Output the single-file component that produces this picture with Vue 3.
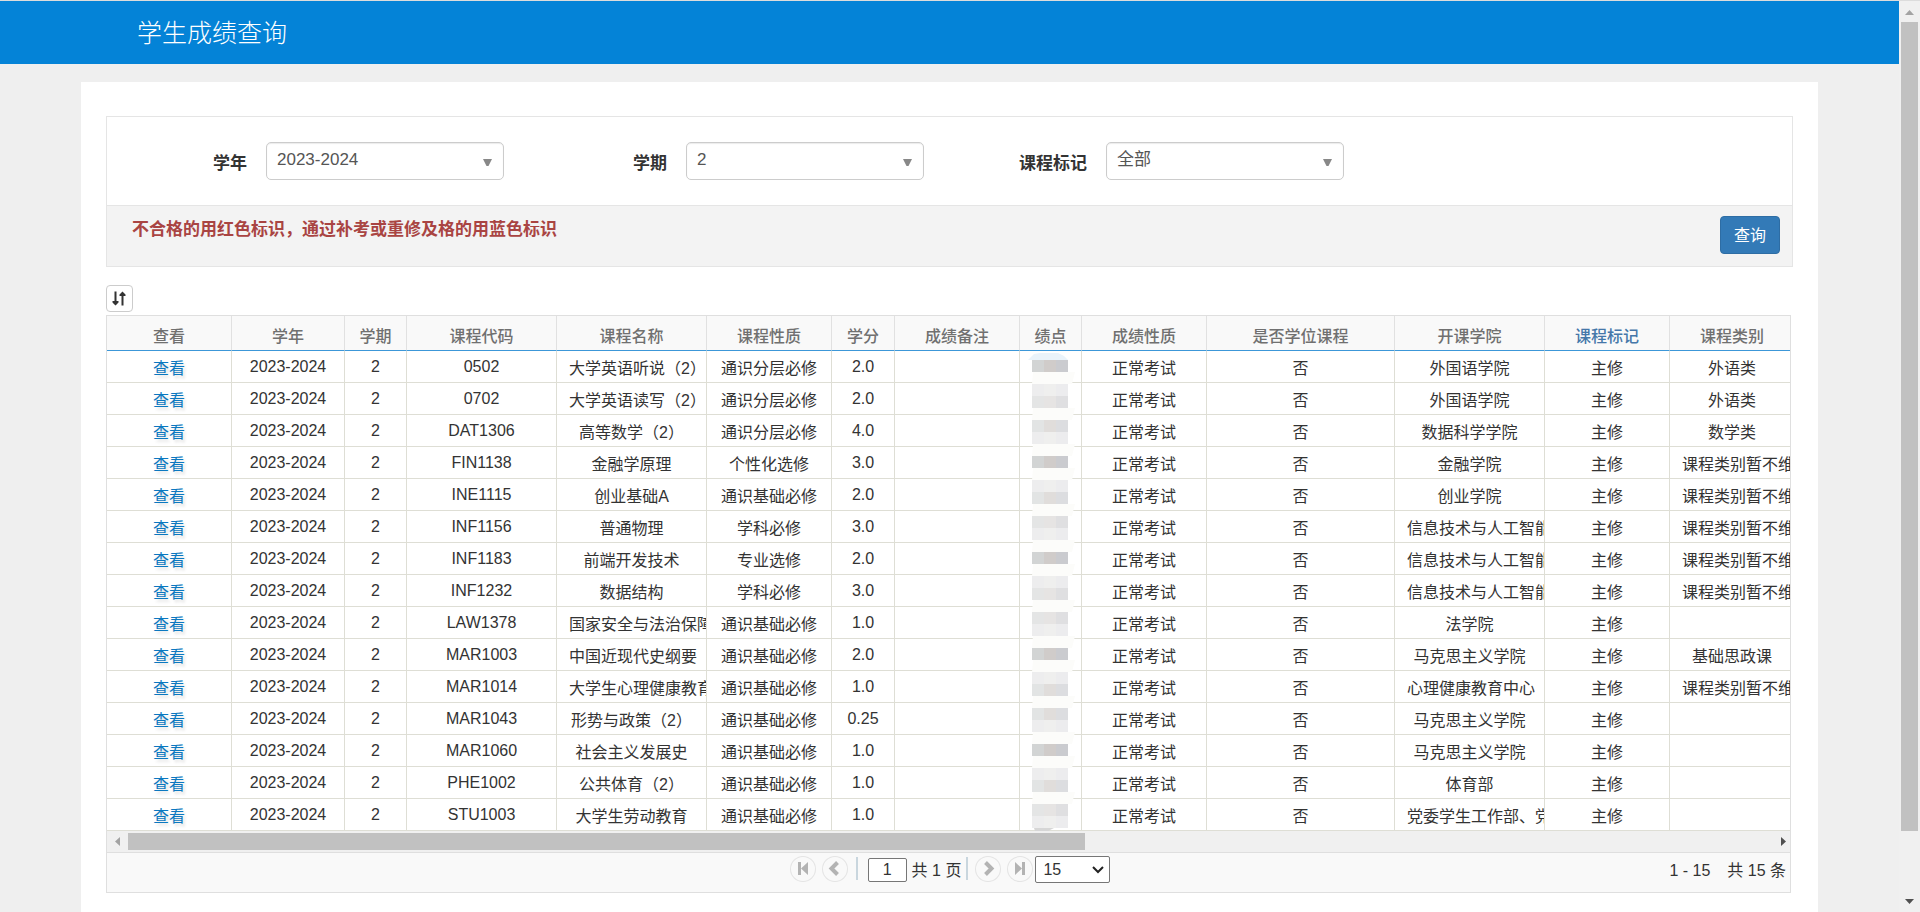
<script setup>
import { ref } from 'vue'

const filters = [
  { id: 'year', label: '学年', value: '2023-2024' },
  { id: 'term', label: '学期', value: '2' },
  { id: 'mark', label: '课程标记', value: '全部' },
]

const columns = [
  { title: '查看', width: 125 },
  { title: '学年', width: 113 },
  { title: '学期', width: 62 },
  { title: '课程代码', width: 150 },
  { title: '课程名称', width: 150 },
  { title: '课程性质', width: 125 },
  { title: '学分', width: 63 },
  { title: '成绩备注', width: 125 },
  { title: '绩点', width: 62 },
  { title: '成绩性质', width: 125 },
  { title: '是否学位课程', width: 188 },
  { title: '开课学院', width: 150 },
  { title: '课程标记', width: 125, sorted: true },
  { title: '课程类别', width: 125 },
]

const unset = '课程类别暂不维护'
const ai = '信息技术与人工智能学院'
const courses = [
  ['0502', '大学英语听说（2）', '通识分层必修', '2.0', '外国语学院', '外语类'],
  ['0702', '大学英语读写（2）', '通识分层必修', '2.0', '外国语学院', '外语类'],
  ['DAT1306', '高等数学（2）', '通识分层必修', '4.0', '数据科学学院', '数学类'],
  ['FIN1138', '金融学原理', '个性化选修', '3.0', '金融学院', unset],
  ['INE1115', '创业基础A', '通识基础必修', '2.0', '创业学院', unset],
  ['INF1156', '普通物理', '学科必修', '3.0', ai, unset],
  ['INF1183', '前端开发技术', '专业选修', '2.0', ai, unset],
  ['INF1232', '数据结构', '学科必修', '3.0', ai, unset],
  ['LAW1378', '国家安全与法治保障', '通识基础必修', '1.0', '法学院', ''],
  ['MAR1003', '中国近现代史纲要', '通识基础必修', '2.0', '马克思主义学院', '基础思政课'],
  ['MAR1014', '大学生心理健康教育', '通识基础必修', '1.0', '心理健康教育中心', unset],
  ['MAR1043', '形势与政策（2）', '通识基础必修', '0.25', '马克思主义学院', ''],
  ['MAR1060', '社会主义发展史', '通识基础必修', '1.0', '马克思主义学院', ''],
  ['PHE1002', '公共体育（2）', '通识基础必修', '1.0', '体育部', ''],
  ['STU1003', '大学生劳动教育', '通识基础必修', '1.0', '党委学生工作部、党委', ''],
]
const rows = courses.map(([code, name, nature, credit, college, category]) => [
  '2023-2024', '2', code, name, nature, credit, '', '', '正常考试', '否', college, '主修', category,
])

// Pixelated mask over the grade points: 12px bands of three tiles each
const tones = {
  d: ['#d2d4d4', '#d0ccca', '#cacbcf'],
  m: ['#e2e4e4', '#e0dddb', '#dcdde0'],
  n: ['#e4e5e5', '#e6e4e3', '#dfdfe1'],
  l: ['#ededee', '#efefee', '#ececee'],
}
const bands = 'dwlnwmlwdwlmwnlwdwlnwnlwdwlmwmlwdwlmwnl'.split('')

const page = ref('1')
</script>

<template>
  <div class="window">
    <div class="page">
      <header class="topbar"><h1>学生成绩查询</h1></header>
      <main>
        <section class="card">
          <form class="search" @submit.prevent>
            <div class="fields">
              <div v-for="f in filters" :key="f.id" class="field">
                <label :for="f.id">{{ f.label }}</label>
                <div class="picker">
                  <select :id="f.id"><option>{{ f.value }}</option></select>
                  <svg width="9" height="7" viewBox="0 0 9 7"><path d="M0 0H9L5.5 7H3.5Z" fill="#888" /></svg>
                </div>
              </div>
            </div>
            <div class="actions">
              <p>不合格的用红色标识，通过补考或重修及格的用蓝色标识</p>
              <button type="submit">查询</button>
            </div>
          </form>

          <button type="button" class="sort" aria-label="排序">
            <svg width="14" height="15" viewBox="0 0 14 15" fill="#333">
              <path d="M2.5 0.5H4.5V10H6.5V11.5L3.5 14.5L0.5 11.5V10H2.5Z" />
              <path d="M9.5 14.5H11.5V5H13.5V3.5L10.5 0.5L7.5 3.5V5H9.5Z" />
            </svg>
          </button>

          <div class="grid">
            <div class="viewport">
              <table>
                <colgroup>
                  <col v-for="c in columns" :key="c.title" :style="{ width: c.width + 'px' }" />
                </colgroup>
                <thead>
                  <tr>
                    <th v-for="c in columns" :key="c.title" :class="{ sorted: c.sorted }">{{ c.title }}</th>
                  </tr>
                </thead>
                <tbody>
                  <tr v-for="r in rows" :key="r[2]">
                    <td><a href="#">查看</a></td>
                    <td v-for="(v, i) in r" :key="i">{{ v }}</td>
                  </tr>
                </tbody>
              </table>
              <svg class="mask" width="50" height="480" viewBox="0 0 50 480">
                <path d="M2 8L8 2L14 1L32 1L38 4L42 8Z" fill="#eaf3fa" />
                <template v-for="(b, i) in bands" :key="i">
                  <path v-if="b === 'w'" :d="`M7 ${8 + i * 12}h42l-3 12H6Z`" fill="#fcfcfa" />
                  <template v-else>
                    <rect v-for="(t, j) in tones[b]" :key="j" :x="6 + j * 12" :y="8 + i * 12" width="12" height="12" :fill="t" />
                  </template>
                </template>
                <path d="M8 476H28L22 479H9Z" fill="#d6d6d6" />
              </svg>
            </div>
            <div class="hbar">
              <svg width="21" height="21" viewBox="0 0 21 21"><path d="M13 6V15L8 10.5Z" fill="#a3a3a3" /></svg>
              <div class="hthumb"></div>
              <div class="hrest"></div>
              <svg width="21" height="21" viewBox="0 0 21 21"><path d="M12 6V15L17 10.5Z" fill="#505050" /></svg>
            </div>
            <div class="pager">
              <div class="controls">
                <button type="button" aria-label="首页">
                  <svg width="26" height="26" viewBox="0 0 26 26"><path d="M8 6H11V19H8ZM18 6V19L11 12.5Z" fill="#b3b3b3" /></svg>
                </button>
                <button type="button" aria-label="上一页">
                  <svg width="26" height="26" viewBox="0 0 26 26"><path d="M15.5 6.5L9.5 12.5L15.5 18.5" fill="none" stroke="#b3b3b3" stroke-width="4" /></svg>
                </button>
                <span class="sep"></span>
                <input v-model="page" type="text" aria-label="页码" />
                <span class="total">共 1 页</span>
                <span class="sep"></span>
                <button type="button" class="next" aria-label="下一页">
                  <svg width="26" height="26" viewBox="0 0 26 26"><path d="M10.5 6.5L16.5 12.5L10.5 18.5" fill="none" stroke="#b3b3b3" stroke-width="4" /></svg>
                </button>
                <button type="button" aria-label="末页">
                  <svg width="26" height="26" viewBox="0 0 26 26"><path d="M18 6H15V19H18ZM8 6V19L15 12.5Z" fill="#b3b3b3" /></svg>
                </button>
                <div class="size">
                  <select aria-label="每页条数"><option>15</option></select>
                  <svg width="12" height="8" viewBox="0 0 12 8"><path d="M1 1L6 6L11 1" fill="none" stroke="#222" stroke-width="2" /></svg>
                </div>
              </div>
              <div class="summary"><span>1 - 15</span><span>共 15 条</span></div>
            </div>
          </div>
        </section>
      </main>
    </div>
    <div class="vbar">
      <svg width="21" height="21" viewBox="0 0 21 21"><path d="M6 14H15L10.5 9Z" fill="#a3a3a3" /></svg>
      <div class="vthumb"></div>
      <div class="vrest"></div>
      <svg width="21" height="21" viewBox="0 0 21 21"><path d="M6 8H15L10.5 13Z" fill="#505050" /></svg>
    </div>
  </div>
</template>

<style>
body {
  margin: 0;
  overflow: hidden;
}
</style>

<style scoped>
* {
  box-sizing: border-box;
}
.window {
  display: grid;
  grid-template-columns: 1fr 21px;
  height: 100vh;
  border-top: 1px solid #dcdcdc;
  background: #efefef;
  color: #333;
  font: 16px "Liberation Sans", "Noto Sans CJK SC", sans-serif;
}
button,
input,
select {
  margin: 0;
  font: inherit;
  color: inherit;
}
.page {
  display: flex;
  flex-direction: column;
  min-width: 0;
  overflow: hidden;
}
.topbar {
  display: flex;
  flex: none;
  align-items: center;
  height: 63px;
  padding: 0 0 4px 137px;
  background: #0483d7;
}
h1 {
  margin: 0;
  color: #fff;
  font-size: 25px;
  font-weight: 300;
}
main {
  display: flex;
  flex: 1;
  padding: 18px 81px 0;
}
.card {
  flex: 1;
  min-width: 0;
  padding: 34px 25px 0;
  background: #fff;
}
.search {
  border: 1px solid #e5e5e5;
}
.fields {
  display: grid;
  grid-template-columns: repeat(4, 1fr);
  padding: 25px 0 25px 5px;
}
.field {
  display: grid;
  grid-template-columns: 135px 238px;
  gap: 19px;
}
.field label {
  padding-top: 6px;
  font-size: 17px;
  font-weight: bold;
  text-align: right;
  line-height: 32px;
}
.picker {
  position: relative;
}
.picker select {
  display: block;
  width: 100%;
  height: 38px;
  padding: 0 10px 4px;
  appearance: none;
  border: 1px solid #ccc;
  border-radius: 5px;
  background: #fff;
  box-shadow: inset 0 1px 1px rgba(0, 0, 0, 0.08);
  color: #555;
  font-size: 17px;
}
.picker svg {
  position: absolute;
  top: 17px;
  right: 12px;
  pointer-events: none;
}
.actions {
  display: flex;
  justify-content: space-between;
  align-items: flex-start;
  padding: 10px 12px 12px 25px;
  border-top: 1px solid #e5e5e5;
  background: #f3f3f3;
}
.actions p {
  margin: 0;
  color: #a94442;
  font-size: 17px;
  font-weight: bold;
  line-height: 28px;
}
.actions button {
  width: 60px;
  height: 38px;
  padding: 0 0 3px;
  border: 1px solid #2e6da4;
  border-radius: 4px;
  background: #337ab7;
  color: #fff;
}
.sort {
  display: flex;
  align-items: center;
  justify-content: center;
  width: 27px;
  height: 27px;
  margin: 18px 0 3px;
  padding: 0 1px 0 0;
  border: 1px solid #ccc;
  border-radius: 4px;
  background: #fff;
}
.grid {
  margin-right: 2px;
  border: 1px solid #dfdfdf;
}
.viewport {
  position: relative;
  overflow: hidden;
}
table {
  width: 1688px;
  table-layout: fixed;
  border-spacing: 0;
}
th,
td {
  overflow: hidden;
  white-space: nowrap;
  text-align: center;
}
th {
  height: 35px;
  padding: 3px 12px 0;
  border-right: 1px solid #e1e1e1;
  border-bottom: 1px solid #3c97d8;
  background: #f9f9f9;
  color: #707070;
  font-weight: 500;
}
th.sorted {
  color: #4577a9;
}
td {
  height: 32px;
  padding: 0 12px;
  border-right: 1px solid #deded5;
  border-bottom: 1px solid #deded5;
}
a {
  color: #0b78c0;
  text-decoration: none;
  text-shadow: 2px 3px 3px rgba(0, 0, 0, 0.12);
}
.mask {
  position: absolute;
  top: 36px;
  left: 919px;
}
.hbar {
  display: flex;
  height: 21px;
  background: #f0f0f0;
}
.hthumb {
  flex: 7;
  margin: 2px 0;
  background: #c1c1c1;
}
.hrest {
  flex: 5;
}
.pager {
  display: grid;
  grid-template-columns: 1fr auto 1fr;
  height: 40px;
  border-top: 1px solid #dfdfdf;
  background: #f9f9f9;
}
.controls {
  display: flex;
  grid-column: 2;
  align-items: center;
  height: 31px;
  padding-left: 3px;
}
.controls button {
  width: 26px;
  height: 26px;
  margin-right: 6px;
  padding: 0;
  border: 0;
  border-radius: 50%;
  background: none;
  box-shadow: inset 0 0 0 1px #e4e4e4;
}
.controls button svg {
  display: block;
}
.controls .next {
  margin-left: 7px;
}
.sep {
  width: 2px;
  height: 23px;
  margin-left: 2px;
  background: #c9d6de;
}
.controls input {
  width: 39px;
  height: 24px;
  margin: 2px 5px 0 10px;
  padding: 0;
  border: 1px solid #767676;
  border-radius: 2px;
  background: #fff;
  text-align: center;
}
.total + .sep {
  margin-left: 5px;
}
.size {
  position: relative;
  margin: 2px 0 0 -4px;
}
.size select {
  display: block;
  width: 75px;
  height: 27px;
  padding: 0 7px;
  appearance: none;
  border: 1px solid #767676;
  border-radius: 2px;
  background: #fff;
}
.size svg {
  position: absolute;
  top: 10px;
  right: 6px;
  pointer-events: none;
}
.summary {
  display: flex;
  gap: 17px;
  align-items: baseline;
  justify-content: flex-end;
  padding: 4px 4px 0 0;
}
.vbar {
  display: flex;
  flex-direction: column;
  background: #f0f0f0;
}
.vthumb {
  flex: 81;
  margin: 0 2px;
  background: #c1c1c1;
}
.vrest {
  flex: 6;
}
</style>
